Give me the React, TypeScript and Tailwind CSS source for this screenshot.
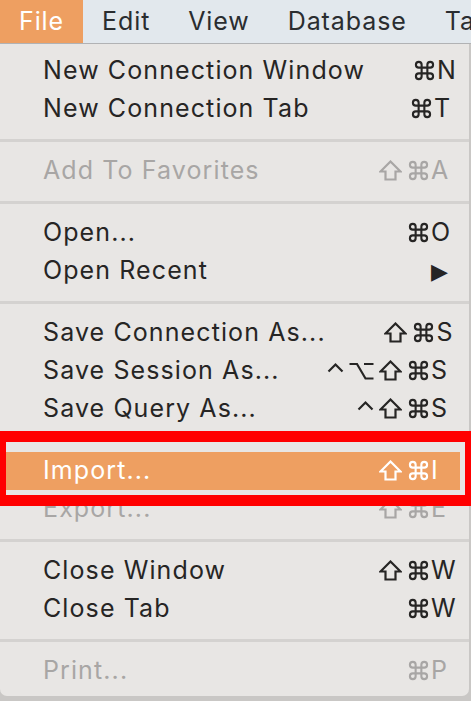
import React from "react"

type Mod = "cmd" | "shift" | "opt" | "ctrl"

type Item =
  | { kind: "sep" }
  | {
      kind: "item"
      label: string
      mods?: Mod[]
      keyLabel?: string
      disabled?: boolean
      active?: boolean
    }

const items: Item[] = [
  { kind: "item", label: "New Connection Window", mods: ["cmd"], keyLabel: "N" },
  { kind: "item", label: "New Connection Tab", mods: ["cmd"], keyLabel: "T" },
  { kind: "sep" },
  { kind: "item", label: "Add To Favorites", mods: ["shift", "cmd"], keyLabel: "A", disabled: true },
  { kind: "sep" },
  { kind: "item", label: "Open...", mods: ["cmd"], keyLabel: "O" },
  { kind: "item", label: "Open Recent", keyLabel: "▶" },
  { kind: "sep" },
  { kind: "item", label: "Save Connection As...", mods: ["shift", "cmd"], keyLabel: "S" },
  { kind: "item", label: "Save Session As...", mods: ["ctrl", "opt", "shift", "cmd"], keyLabel: "S" },
  { kind: "item", label: "Save Query As...", mods: ["ctrl", "shift", "cmd"], keyLabel: "S" },
  { kind: "sep" },
  { kind: "item", label: "Import...", mods: ["shift", "cmd"], keyLabel: "I", active: true },
  { kind: "item", label: "Export...", mods: ["shift", "cmd"], keyLabel: "E", disabled: true },
  { kind: "sep" },
  { kind: "item", label: "Close Window", mods: ["shift", "cmd"], keyLabel: "W" },
  { kind: "item", label: "Close Tab", mods: ["cmd"], keyLabel: "W" },
  { kind: "sep" },
  { kind: "item", label: "Print...", mods: ["cmd"], keyLabel: "P", disabled: true },
]

const menus = ["File", "Edit", "View", "Database", "Table"]

function ModGlyph({ mod }: { mod: Mod }) {
  const common = {
    fill: "none",
    stroke: "currentColor",
    strokeWidth: 2.2,
    strokeLinejoin: "miter" as const,
  }
  if (mod === "cmd") {
    return (
      <svg width="23" height="21" viewBox="0 0 22 22" {...common}>
        <path d="M8 8V5a3 3 0 1 0-3 3H17a3 3 0 1 0-3-3V17a3 3 0 1 0 3-3H5a3 3 0 1 0 3 3Z" />
      </svg>
    )
  }
  if (mod === "shift") {
    return (
      <svg width="23" height="21" viewBox="0 0 23 21" {...common}>
        <path d="M11.5 1.5L21.5 11.5H16.5V19.5H6.5V11.5H1.5Z" />
      </svg>
    )
  }
  if (mod === "opt") {
    return (
      <svg width="25" height="18" viewBox="0 0 25 18" {...common}>
        <path d="M0.5 2H8L16.5 16.5H24.5M15 2H24.5" />
      </svg>
    )
  }
  return (
    <svg width="17" height="18" viewBox="0 0 17 18" {...common}>
      <path d="M1.5 9.5L8.5 2.5L15.5 9.5" />
    </svg>
  )
}

function MenuRow({ item }: { item: Extract<Item, { kind: "item" }> }) {
  const color = item.active
    ? "text-white"
    : item.disabled
      ? "text-[#a8a6a5]"
      : "text-[#262524]"
  return (
    <div
      className={`flex h-[38px] items-center pl-[43px] pr-[3px] mr-[9px] ${
        item.active ? "bg-[#ee9f61]" : ""
      } ${color}`}
    >
      <span className="flex-1 whitespace-nowrap">{item.label}</span>
      <span className="flex w-[140px] items-center justify-end gap-[5px] pr-[1px] pb-[1px]">
        {(item.mods ?? []).map((m, i) => (
          <ModGlyph key={i} mod={m} />
        ))}
      </span>
      <span className="w-[26px] whitespace-nowrap">
        {item.keyLabel === "▶" ? (
          <span className="font-['DejaVu_Sans',sans-serif] text-[22px]">▶</span>
        ) : (
          item.keyLabel
        )}
      </span>
    </div>
  )
}

export default function App() {
  return (
    <div className="relative h-[701px] w-[471px] overflow-hidden bg-[#c9c7c5] font-['Inter',sans-serif] text-[25px] tracking-[1.1px]">
      <div className="flex h-[44px] border-b border-[#b1b2b4] bg-[#e2e8ed] text-[#2a2d30] tracking-[0.9px]">
        {menus.map((m, i) => (
          <div
            key={m}
            className={`flex items-center px-[19px] whitespace-nowrap ${
              i === 0 ? "bg-[#ee9f61] text-white" : ""
            }`}
          >
            {m}
          </div>
        ))}
      </div>

      <div className="w-[469px] rounded-b-[7px] bg-[#e8e6e4] pt-[8px] pb-[6px]">
        {items.map((item, i) =>
          item.kind === "sep" ? (
            <div key={i} className="flex h-[24px] items-center">
              <div className="h-[3px] w-full bg-[#d4d2d0]" />
            </div>
          ) : (
            <MenuRow key={i} item={item} />
          )
        )}
      </div>

      {/* red annotation box */}
      <div className="absolute left-0 top-[431px] h-[75px] w-[471px] border-x-[6px] border-y-[11px] border-[#ff0000]" />
    </div>
  )
}
